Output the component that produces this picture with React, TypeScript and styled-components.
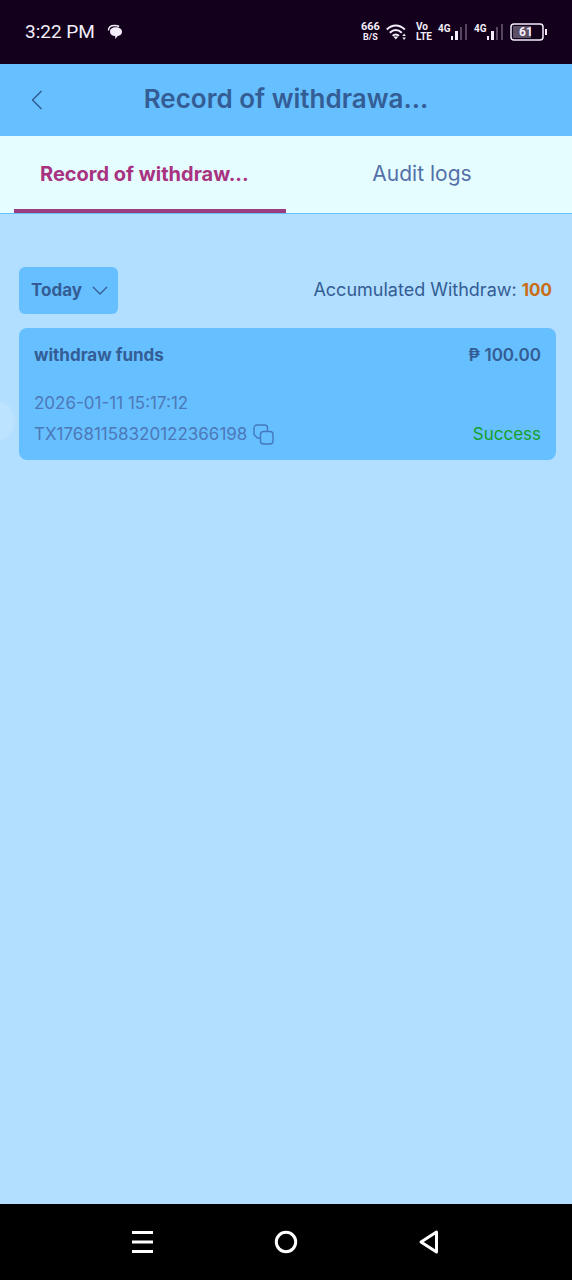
import React, { useState } from 'react';
import styled, { createGlobalStyle } from 'styled-components';

const GlobalStyle = createGlobalStyle`
  * { box-sizing: border-box; }
  body { margin: 0; background: #b2deff; }
  button, select { font: inherit; color: inherit; border: 0; padding: 0; margin: 0; background: none; cursor: pointer; }
`;

const Screen = styled.div`
  min-height: 100vh;
  display: flex;
  flex-direction: column;
  font-family: Inter, 'Noto Sans', sans-serif;
  font-size: 17px;
  line-height: 24px;
  color: #335d94;
  background: #b2deff;
`;

const StatusBar = styled.div`
  display: flex;
  align-items: center;
  justify-content: space-between;
  height: 64px;
  padding: 0 25px;
  background: #12001c;
  color: #f4eefa;
  font-family: Roboto, sans-serif;
`;

const StatusGroup = styled.div<{ $gap: number }>`
  display: flex;
  align-items: center;
  gap: ${(p) => p.$gap}px;
`;

const Clock = styled.time`
  font-size: 19px;
`;

const TinyStack = styled.div<{ $size: number }>`
  display: flex;
  flex-direction: column;
  align-items: flex-start;
  font-size: ${(p) => p.$size}px;
  font-weight: 700;
  line-height: 10px;
`;

const TinyUnit = styled.span`
  align-self: center;
  font-size: 9px;
`;

const Header = styled.header`
  display: grid;
  grid-template-columns: 74px 1fr 74px;
  align-items: center;
  height: 72px;
  background: #66bfff;
`;

const BackButton = styled.button`
  display: flex;
  align-items: center;
  justify-content: center;
  height: 48px;
`;

const Title = styled.h1`
  margin: 0;
  padding-bottom: 2px;
  font-size: 26px;
  line-height: 32px;
  font-weight: 600;
  text-align: center;
  white-space: nowrap;
`;

const Tabs = styled.div`
  display: flex;
  height: 78px;
  padding: 0 14px;
  background: #e5fdff;
  border-bottom: 1px solid #66bfff;
`;

const Tab = styled.button<{ $active: boolean }>`
  flex: 1;
  min-width: 0;
  padding: 2px 26px 0;
  text-align: ${(p) => (p.$active ? 'left' : 'center')};
  white-space: nowrap;
  font-size: ${(p) => (p.$active ? 20 : 21)}px;
  font-weight: ${(p) => (p.$active ? 700 : 400)};
  color: ${(p) => (p.$active ? '#a8327f' : '#5470a8')};
  border-bottom: 4px solid ${(p) => (p.$active ? '#993d80' : 'transparent')};
`;

const Main = styled.main`
  flex: 1;
  display: flex;
  flex-direction: column;
  gap: 14px;
  padding: 53px 16px 24px 19px;
  background: radial-gradient(circle at -6px 207px, #bce3ff 19px, transparent 23px);
`;

const FilterRow = styled.div`
  display: flex;
  align-items: center;
  justify-content: space-between;
  padding-right: 4px;
`;

const SelectBox = styled.label`
  display: grid;
  align-items: center;
  width: 99px;
  height: 47px;
  border-radius: 6px;
  background: #66bfff;
  > * { grid-area: 1 / 1; }
  > svg { justify-self: end; margin-right: 10px; pointer-events: none; }
`;

const PeriodSelect = styled.select`
  appearance: none;
  width: 100%;
  height: 100%;
  padding: 0 30px 2px 12px;
  font-weight: 700;
`;

const Total = styled.p`
  margin: 0;
  padding-bottom: 2px;
  font-size: 18px;
  white-space: nowrap;
`;

const TotalValue = styled.strong`
  font-size: 17px;
  font-weight: 700;
  color: #c96c14;
`;

const Card = styled.article`
  display: flex;
  flex-direction: column;
  height: 132px;
  padding: 15px 15px 0;
  border-radius: 8px;
  background: #66bfff;
`;

const CardRow = styled.div`
  display: flex;
  align-items: center;
  justify-content: space-between;
`;

const CardHead = styled(CardRow)`
  margin-bottom: 24px;
  font-weight: 600;
`;

const CardTitle = styled.h2`
  margin: 0;
  font: inherit;
  font-weight: 700;
`;

const Meta = styled.span`
  display: flex;
  align-items: center;
  gap: 6px;
  color: #4d78b8;
`;

const CardFoot = styled(CardRow)`
  margin-top: 7px;
`;

const IconButton = styled.button`
  display: flex;
`;

const Status = styled.span`
  color: #14a02c;
`;

const NavBar = styled.nav`
  display: grid;
  grid-template-columns: repeat(3, 1fr);
  align-items: center;
  height: 76px;
  padding: 0 12.5%;
  background: #000;
`;

const NavButton = styled.button`
  display: flex;
  justify-content: center;
`;

const ChatIcon = () => (
  <svg width="16" height="16" viewBox="0 0 16 16" fill="#f4eefa" aria-hidden="true">
    <path d="M8.800 3.200c3.500 0 6.200 1.600 6.200 4.500 0 2.400-1.900 4-4.200 4.300L8.200 15V12.100C5 11.900 3 10.200 3 7.700c0-2.900 2.300-4.500 5.800-4.500Z" />
    <path d="M1.500 6.500C1.500 3.300 4.200 1.600 7.500 1.600c2 0 3.400.2 4.600.9" fill="none" stroke="#f4eefa" strokeWidth="1.500" />
  </svg>
);

const WifiIcon = () => (
  <svg width="24" height="18" viewBox="0 0 24 18" fill="none" stroke="#f4eefa" strokeWidth="2" aria-hidden="true">
    <path d="M.8 6.500C6.300 1.200 13.300 1.200 18.800 6.500M3.800 9.700c3.800-3.500 8.200-3.500 12 0M6.600 12.800c2.200-1.800 4.200-1.800 6.400 0" />
    <path d="m7.300 13.500 2.500 3 2.500-3Z" fill="#f4eefa" stroke="none" />
    <path d="m16.300 13 1.800-2.500 1.800 2.500ZM16.300 14.500l1.800 2.500 1.800-2.500Z" fill="#f4eefa" stroke="none" />
  </svg>
);

const SignalIcon = () => (
  <svg width="30" height="20" viewBox="0 0 30 20" fill="#f4eefa" aria-hidden="true">
    <text x="0" y="10" fontSize="10" fontWeight="700">4G</text>
    <rect x="13" y="14" width="2" height="4" />
    <rect x="17" y="9" width="3" height="9" />
    <rect x="22" y="5" width="2" height="13" fill="#55465f" />
    <rect x="27" y="2" width="2" height="16" fill="#55465f" />
  </svg>
);

const BatteryIcon = () => (
  <svg width="37" height="18" viewBox="0 0 37 18" aria-hidden="true">
    <rect x="3" y="3" width="18" height="12" fill="#5c5064" />
    <rect x="1" y="1" width="32" height="16" rx="3" fill="none" stroke="#f4eefa" strokeWidth="1.500" />
    <rect x="35" y="6" width="2" height="6" fill="#f4eefa" />
    <text x="16" y="13" textAnchor="middle" fontSize="12" fontWeight="700" fill="#f4eefa">61</text>
  </svg>
);

const BackIcon = () => (
  <svg width="12" height="20" viewBox="0 0 12 20" fill="none" stroke="#335d94" strokeWidth="1.500" aria-hidden="true">
    <path d="M10.500 1 1.500 10l9 9" strokeLinejoin="round" />
  </svg>
);

const ChevronIcon = () => (
  <svg width="16" height="10" viewBox="0 0 16 10" fill="none" stroke="#335d94" strokeWidth="1.400" aria-hidden="true">
    <path d="m1 1 7 7 7-7" strokeLinejoin="round" />
  </svg>
);

const CopyIcon = () => (
  <svg width="21" height="21" viewBox="0 0 21 21" fill="none" stroke="#4478bd" strokeWidth="1.400" aria-hidden="true">
    <rect x="7.500" y="7.500" width="12.500" height="12.500" rx="3" />
    <path d="M7.500 14H4.500L1 10.500V4A3 3 0 0 1 4 1h7.500A3 3 0 0 1 14.500 4v3.500" strokeLinejoin="round" />
  </svg>
);

const MenuIcon = () => (
  <svg width="24" height="24" viewBox="0 0 24 24" fill="#fff" aria-hidden="true">
    <path d="M1 1h21v3H1zM1 10.500h21v3H1zM1 20h21v3H1z" />
  </svg>
);

const HomeIcon = () => (
  <svg width="24" height="24" viewBox="0 0 24 24" fill="none" stroke="#fff" strokeWidth="3" aria-hidden="true">
    <circle cx="12" cy="12" r="9.700" />
  </svg>
);

const TriangleIcon = () => (
  <svg width="24" height="24" viewBox="0 0 24 24" fill="none" stroke="#fff" strokeWidth="3" strokeLinejoin="round" aria-hidden="true">
    <path d="M19.500 2v20L4 12Z" />
  </svg>
);

const tabs = ['Record of withdraw...', 'Audit logs'];

export default function App() {
  const [active, setActive] = useState(0);
  return (
    <Screen>
      <GlobalStyle />
      <StatusBar>
        <StatusGroup $gap={12}>
          <Clock>3:22 PM</Clock>
          <ChatIcon />
        </StatusGroup>
        <StatusGroup $gap={6}>
          <TinyStack $size={11}><span>666</span><TinyUnit>B/S</TinyUnit></TinyStack>
          <WifiIcon />
          <TinyStack $size={10}><span>Vo</span><span>LTE</span></TinyStack>
          <SignalIcon />
          <SignalIcon />
          <BatteryIcon />
        </StatusGroup>
      </StatusBar>
      <Header>
        <BackButton aria-label="Back"><BackIcon /></BackButton>
        <Title>Record of withdrawa...</Title>
      </Header>
      <Tabs role="tablist">
        {tabs.map((label, i) => (
          <Tab key={label} role="tab" aria-selected={active === i} $active={active === i} onClick={() => setActive(i)}>
            {label}
          </Tab>
        ))}
      </Tabs>
      <Main>
        <FilterRow>
          <SelectBox>
            <PeriodSelect aria-label="Period" defaultValue="Today">
              <option>Today</option>
            </PeriodSelect>
            <ChevronIcon />
          </SelectBox>
          <Total>Accumulated Withdraw: <TotalValue>100</TotalValue></Total>
        </FilterRow>
        <Card>
          <CardHead>
            <CardTitle>withdraw funds</CardTitle>
            <span>₱ 100.00</span>
          </CardHead>
          <Meta>2026-01-11 15:17:12</Meta>
          <CardFoot>
            <Meta>
              TX17681158320122366198
              <IconButton aria-label="Copy transaction number"><CopyIcon /></IconButton>
            </Meta>
            <Status>Success</Status>
          </CardFoot>
        </Card>
      </Main>
      <NavBar aria-label="System">
        <NavButton aria-label="Recent apps"><MenuIcon /></NavButton>
        <NavButton aria-label="Home"><HomeIcon /></NavButton>
        <NavButton aria-label="Back"><TriangleIcon /></NavButton>
      </NavBar>
    </Screen>
  );
}
